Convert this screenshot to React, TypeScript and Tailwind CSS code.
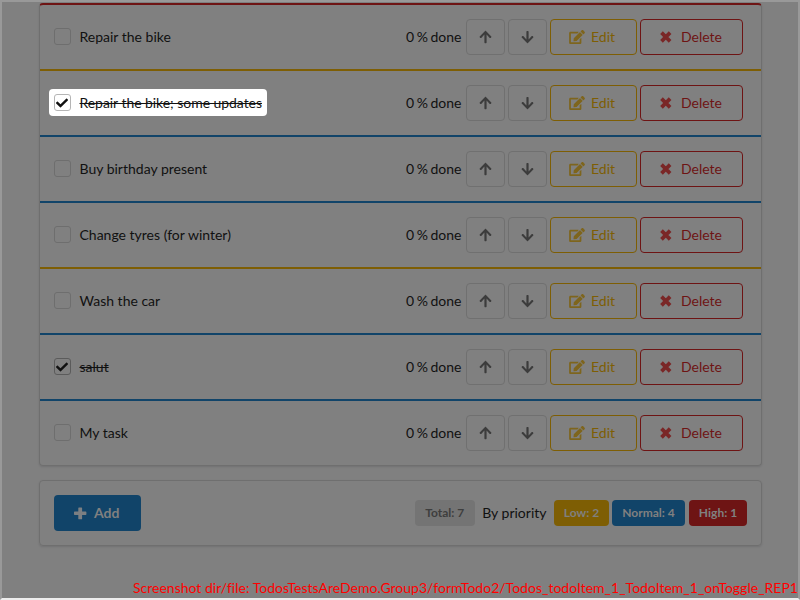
import React from "react";
import { FaArrowUp, FaArrowDown, FaCheck, FaEdit } from "react-icons/fa";

const edge = {
  red: "border-[#6e1414]",
  yellow: "border-[#7e5e04]",
  blue: "border-[#114469]",
};

type Todo = { text: string; done?: boolean; lit?: boolean; color?: keyof typeof edge };

const todos: Todo[] = [
  { text: "Repair the bike", color: "yellow" },
  { text: "Repair the bike; some updates", done: true, lit: true, color: "blue" },
  { text: "Buy birthday present", color: "blue" },
  { text: "Change tyres (for winter)", color: "yellow" },
  { text: "Wash the car", color: "blue" },
  { text: "salut", done: true, color: "blue" },
  { text: "My task" },
];

function Cross() {
  return (
    <svg viewBox="0 0 12 12" className="h-3 w-3" fill="none" stroke="#7a2727" strokeWidth="3.7">
      <path d="M1.5 1.6 10.1 10.4M10.1 1.6 1.5 10.4" />
    </svg>
  );
}

function Plus() {
  return (
    <svg viewBox="0 0 13 13" className="h-[13px] w-[13px]" fill="#7c7f82">
      <path d="M4.9.5h2.6q.6 0 .6.6v3.5h3.6q.7 0 .7.6v2.1q0 .7-.7.7H8.100v3.700q0 .6-.6.6H4.900q-.6 0-.6-.6V8H.7Q0 8 0 7.300V5.200q0-.6.7-.6h3.600V1.100q0-.6.6-.6z" />
    </svg>
  );
}

function Row({ todo }: { todo: Todo }) {
  return (
    <div
      className={`flex items-center pr-[18px] pl-[9px] ${
        todo.color ? `h-[66px] border-b-2 ${edge[todo.color]}` : "h-16"
      }`}
    >
      <div className={`mb-px flex h-[27px] items-center rounded-[4px] px-[5px] ${todo.lit ? "bg-white" : ""}`}>
        <span
          className={`flex h-[17px] w-[17px] items-center justify-center rounded-[3px] border ${
            todo.lit ? "border-[#b5b5b5]" : todo.done ? "border-[#5b5b5b]" : "border-[#6e6e6e]"
          }`}
        >
          {todo.done && <FaCheck className="mr-px h-3 w-3 text-[#111]" />}
        </span>
        <span
          className={`ml-[8.5px] pt-px ${todo.done ? "line-through" : ""} ${todo.lit ? "tracking-[-0.05px]" : ""}`}
        >
          {todo.text}
        </span>
      </div>
      <span className="mr-[4.5px] ml-auto [word-spacing:-1px]">0 % done</span>
      <button className="mr-[3px] flex h-9 w-[39px] items-center justify-center rounded-[4px] border border-[#707070] text-[#3c3c3c]">
        <FaArrowUp className="h-[14px] w-[13px]" />
      </button>
      <button className="mr-[3px] flex h-9 w-[39px] items-center justify-center rounded-[4px] border border-[#707070] text-[#3c3c3c]">
        <FaArrowDown className="h-[14px] w-[13px]" />
      </button>
      <button className="mr-[3px] flex h-9 w-[87px] items-center rounded-[4px] border border-[#7e5e04] pl-[17.5px] text-[#7e5e04]">
        <FaEdit className="h-[14px] w-[16px] text-[#7e651d]" />
        <span className="ml-[6.5px]">Edit</span>
      </button>
      <button className="flex h-9 w-[103px] items-center rounded-[4px] border border-[#6e1414] pl-[19px] text-[#6e1414]">
        <Cross />
        <span className="ml-[9px]">Delete</span>
      </button>
    </div>
  );
}

export default function App() {
  return (
    <div className="h-[600px] w-[800px] overflow-hidden border-2 border-t-[#999] border-r-[#999] border-b-[#ededed] border-l-[#999] bg-[#808080] font-['Lato',sans-serif] text-[14px] leading-5 text-[#111]">
      <div className="flex h-full flex-col pr-[36px] pl-[37px]">
        <section className="mt-px h-[463px] shrink-0 rounded-[4px] border border-t-2 border-[#6f6f6f] border-t-[#6e1414] shadow-[0_1px_2px_rgba(34,36,38,0.15)]">
          {todos.map((todo) => (
            <Row key={todo.text} todo={todo} />
          ))}
        </section>
        <section className="mt-[14px] flex h-[66px] shrink-0 items-center rounded-[4px] border border-[#6f6f6f] px-[14px] shadow-[0_1px_2px_rgba(34,36,38,0.15)]">
          <button className="flex h-9 w-[87px] items-center rounded-[4px] bg-[#114469] pl-[19.5px] font-bold text-[#808080]">
            <Plus />
            <span className="ml-[7.5px]">Add</span>
          </button>
          <span className="ml-auto flex h-[26px] w-[60px] items-center justify-center rounded-[4px] bg-[#747474] text-[12px] font-bold text-[#3e3e3e]">
            Total: 7
          </span>
          <span className="mr-[7.5px] ml-[7.5px]">By priority</span>
          <span className="flex h-[26px] w-[55px] items-center justify-center rounded-[4px] bg-[#7e5e04] text-[12px] font-bold text-[#808080]">
            Low: 2
          </span>
          <span className="ml-[3px] flex h-[26px] w-[73px] items-center justify-center rounded-[4px] bg-[#114469] text-[12px] font-bold text-[#808080]">
            Normal: 4
          </span>
          <span className="ml-1 flex h-[26px] w-[58px] items-center justify-center rounded-[4px] bg-[#6e1414] text-[12px] font-bold text-[#808080]">
            High: 1
          </span>
        </section>
        <div className="mt-auto -mr-[36px] text-right tracking-[0.01px] whitespace-nowrap text-[#f00]">
          Screenshot dir/file: TodosTestsAreDemo.Group3/formTodo2/Todos_todoItem_1_TodoItem_1_onToggle_REP1
        </div>
      </div>
    </div>
  );
}
